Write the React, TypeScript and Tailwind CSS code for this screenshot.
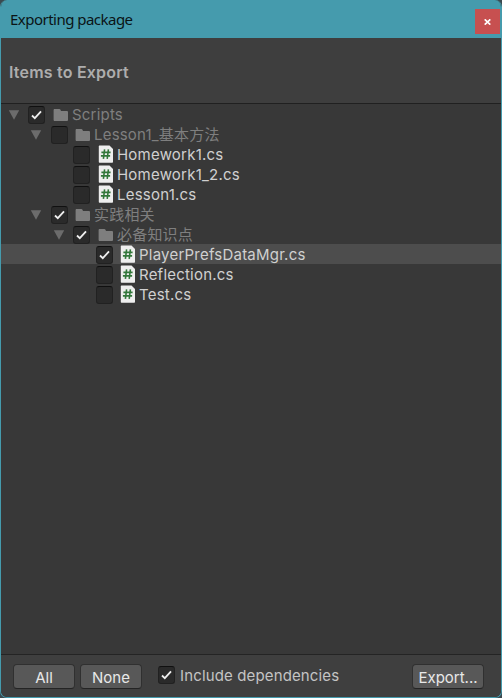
import React from "react";

type Item = {
  label: string;
  level: 0 | 1 | 2 | 3;
  kind: "folder" | "script";
  checked?: boolean;
  selected?: boolean;
};

const items: Item[] = [
  { label: "Scripts", level: 0, kind: "folder", checked: true },
  { label: "Lesson1_基本方法", level: 1, kind: "folder" },
  { label: "Homework1.cs", level: 2, kind: "script" },
  { label: "Homework1_2.cs", level: 2, kind: "script" },
  { label: "Lesson1.cs", level: 2, kind: "script" },
  { label: "实践相关", level: 1, kind: "folder", checked: true },
  { label: "必备知识点", level: 2, kind: "folder", checked: true },
  { label: "PlayerPrefsDataMgr.cs", level: 3, kind: "script", checked: true, selected: true },
  { label: "Reflection.cs", level: 3, kind: "script" },
  { label: "Test.cs", level: 3, kind: "script" },
];

const indents = ["pl-[7px]", "pl-[29px]", "pl-[52px]", "pl-[74px]"];
const arrowWidths = ["w-5", "w-[21px]", "w-5", "w-[21px]"];
const iconGaps = ["ml-2", "ml-[7px]", "ml-2", "ml-[7px]"];

function Checkbox({ checked }: { checked?: boolean }) {
  return (
    <span className="flex h-[18px] w-[17px] shrink-0 items-center justify-center rounded-[3px] border border-[#212121] border-t-[#101010] bg-[#2a2a2a]">
      {checked && (
        <svg width="13" height="12" viewBox="0 0 13 12" fill="none">
          <path d="M2 6.5 4.8 9.2 11 2.4" stroke="#ededed" strokeWidth="1.8" />
        </svg>
      )}
    </span>
  );
}

function FolderIcon() {
  return (
    <svg className="shrink-0" width="16" height="14" viewBox="0 0 16 14">
      <path d="M1.8 1h4.5c.7 0 1 .3 1.3.9L8 3h5.8c.8 0 1.2.4 1.2 1.2v7.6c0 .8-.4 1.2-1.2 1.2H1.8c-.8 0-1.2-.4-1.2-1.2V2.2C.6 1.4 1 1 1.8 1Z" fill="#7e7e7e" />
    </svg>
  );
}

function ScriptIcon() {
  return (
    <svg className="shrink-0" width="16" height="18" viewBox="0 0 16 18">
      <path d="M1.8.6H11.5l3.5 3.5v12.6c0 .6-.4 1-1 1H1.8c-.6 0-1-.4-1-1V1.6c0-.6.4-1 1-1Z" fill="#eeeeee" />
      <path d="M6.6 4.4 5.4 13.8M10.4 4.4 9.2 13.8M3.4 7.4h9.2M2.9 10.9h9.2" stroke="#32773a" strokeWidth="1.6" />
    </svg>
  );
}

function Row({ item }: { item: Item }) {
  const folder = item.kind === "folder";
  return (
    <div className={`flex h-5 items-center ${indents[item.level]} ${item.selected ? "bg-[#4d4d4d]" : ""}`}>
      <span className={`flex shrink-0 items-center pt-0.5 ${arrowWidths[item.level]}`}>
        {folder && (
          <svg width="12" height="12" viewBox="0 0 12 12">
            <path d="M.8 1.2h10.4L6 10.8Z" fill="#6c6c6c" />
          </svg>
        )}
      </span>
      <span className="flex shrink-0 pt-0.5">
        <Checkbox checked={item.checked} />
      </span>
      <span className={`flex w-[19px] shrink-0 items-center ${iconGaps[item.level]} ${folder ? "pt-0.5" : ""}`}>
        {folder ? <FolderIcon /> : <ScriptIcon />}
      </span>
      <span className={`whitespace-nowrap pt-0.5 text-[15px] leading-[18px] ${folder ? "tracking-[0.2px] text-[#7f7f7f]" : "tracking-[0.22px] text-[#d0d0d0]"}`}>
        {item.label}
      </span>
    </div>
  );
}

function Button({ children, className }: { children: React.ReactNode; className: string }) {
  return (
    <button className={`h-[25px] rounded-[4px] border border-[#303030] border-b-[#242424] bg-[#585858] text-center text-[15px] leading-[25px] text-[#e8e8e8] ${className}`}>
      {children}
    </button>
  );
}

export default function App() {
  return (
    <div className="h-[698px] w-[502px] overflow-hidden bg-[#3b4a50] font-['Inter','Noto_Sans_CJK_SC',sans-serif]">
      <div className="flex h-full flex-col overflow-hidden rounded-[7px] border-x border-b border-[#459bad] bg-[#383838]">
        <header className="flex h-[38px] shrink-0 items-start justify-between bg-[#459bad]">
          <h1 className="pl-[9px] pt-[9px] font-['Noto_Sans',sans-serif] text-[15px] leading-5 tracking-[-0.52px] text-[#0b1416]">Exporting package</h1>
          <button className="mr-px mt-[9px] flex h-[25px] w-[25px] items-center justify-center bg-[#c75050]" aria-label="Close">
            <svg width="7" height="6" viewBox="0 0 7 6">
              <path d="M.7.3 6.3 5.7M6.3.3.7 5.7" stroke="white" strokeWidth="1.6" />
            </svg>
          </button>
        </header>
        <section className="flex h-[66px] shrink-0 items-center border-b border-[#202020] bg-[#3e3e3e] pl-2 pt-0.5">
          <h2 className="text-[16px] font-semibold leading-5 tracking-[0.2px] text-[#adadad]">Items to Export</h2>
        </section>
        <main className="flex-1">
          {items.map((item) => (
            <Row key={item.label} item={item} />
          ))}
        </main>
        <footer className="flex h-[43px] shrink-0 items-start border-t border-[#242424] bg-[#3f3f3f] pl-3 pt-[9px]">
          <Button className="w-[62px]">All</Button>
          <Button className="ml-[5px] w-[62px]">None</Button>
          <div className="ml-4 flex items-start pt-0.5">
            <Checkbox checked />
            <span className="ml-[5px] text-[15px] leading-[19px] tracking-[0.14px] text-[#c4c4c4]">Include dependencies</span>
          </div>
          <Button className="ml-auto mr-[17px] w-[72px]">Export...</Button>
        </footer>
      </div>
    </div>
  );
}
